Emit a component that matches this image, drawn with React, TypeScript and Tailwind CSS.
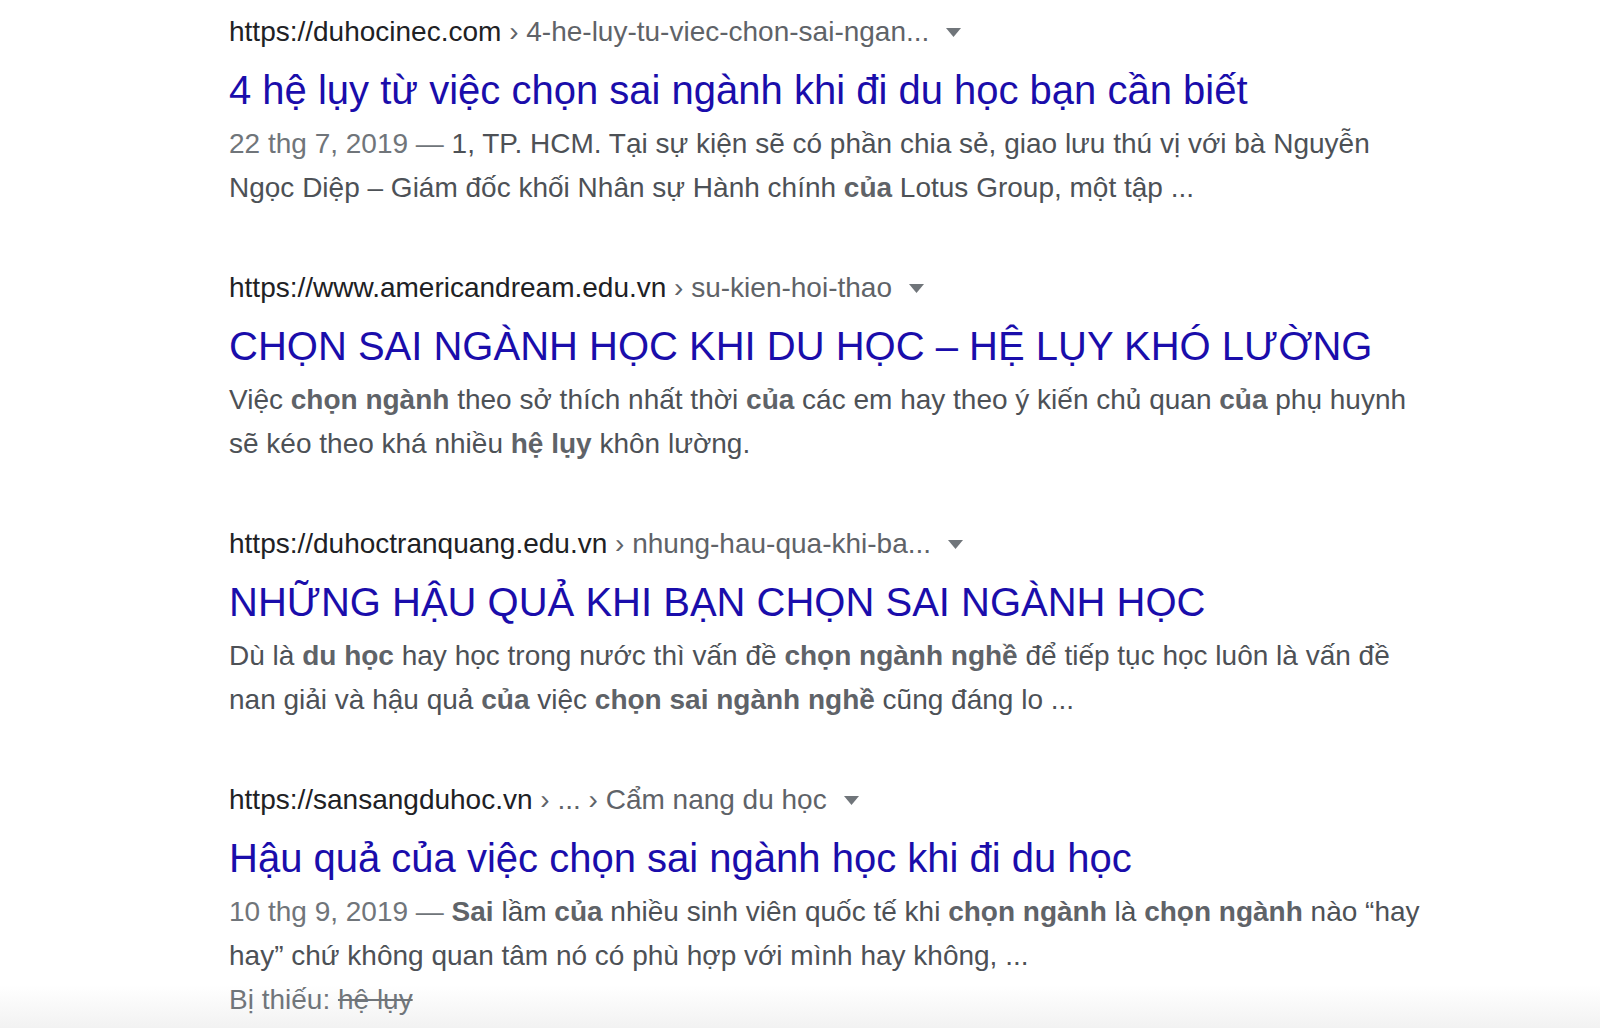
const font = { fontFamily: '"Liberation Sans", Arial, sans-serif' };

type Part = string | { b: string };

type Result = {
  domain: string;
  path: string;
  title: string;
  date?: string;
  snippet: Part[];
  missing?: string;
};

const results: Result[] = [
  {
    domain: "https://duhocinec.com",
    path: "4-he-luy-tu-viec-chon-sai-ngan...",
    title: "4 hệ lụy từ việc chọn sai ngành khi đi du học bạn cần biết",
    date: "22 thg 7, 2019",
    snippet: [
      "1, TP. HCM. Tại sự kiện sẽ có phần chia sẻ, giao lưu thú vị với bà Nguyễn Ngọc Diệp – Giám đốc khối Nhân sự Hành chính ",
      { b: "của" },
      " Lotus Group, một tập ...",
    ],
  },
  {
    domain: "https://www.americandream.edu.vn",
    path: "su-kien-hoi-thao",
    title: "CHỌN SAI NGÀNH HỌC KHI DU HỌC – HỆ LỤY KHÓ LƯỜNG",
    snippet: [
      "Việc ",
      { b: "chọn ngành" },
      " theo sở thích nhất thời ",
      { b: "của" },
      " các em hay theo ý kiến chủ quan ",
      { b: "của" },
      " phụ huynh sẽ kéo theo khá nhiều ",
      { b: "hệ lụy" },
      " khôn lường.",
    ],
  },
  {
    domain: "https://duhoctranquang.edu.vn",
    path: "nhung-hau-qua-khi-ba...",
    title: "NHỮNG HẬU QUẢ KHI BẠN CHỌN SAI NGÀNH HỌC",
    snippet: [
      "Dù là ",
      { b: "du học" },
      " hay học trong nước thì vấn đề ",
      { b: "chọn ngành nghề" },
      " để tiếp tục học luôn là vấn đề nan giải và hậu quả ",
      { b: "của" },
      " việc ",
      { b: "chọn sai ngành nghề" },
      " cũng đáng lo ...",
    ],
  },
  {
    domain: "https://sansangduhoc.vn",
    path: "... › Cẩm nang du học",
    title: "Hậu quả của việc chọn sai ngành học khi đi du học",
    date: "10 thg 9, 2019",
    snippet: [
      { b: "Sai" },
      " lầm ",
      { b: "của" },
      " nhiều sinh viên quốc tế khi ",
      { b: "chọn ngành" },
      " là ",
      { b: "chọn ngành" },
      " nào “hay hay” chứ không quan tâm nó có phù hợp với mình hay không, ...",
    ],
    missing: "hệ lụy",
  },
];

const Arrow = () => (
  <svg width="15" height="9" viewBox="0 0 15 9" className="ml-[17px] shrink-0">
    <path d="M0 0 H15 L7.5 9 Z" fill="#70757a" />
  </svg>
);

const SearchResult = ({ r }: { r: Result }) => (
  <div className="mb-[60px]">
    <div className="flex items-center h-[36px] text-[28px] leading-[36px] whitespace-nowrap">
      <span className="text-[#202124]">{r.domain}</span>
      <span className="text-[#5f6368]">&nbsp;›&nbsp;{r.path}</span>
      <Arrow />
    </div>
    <h3 className="mt-[14px] text-[40px] leading-[52px] text-[#1a0dab] whitespace-nowrap">
      {r.title}
    </h3>
    <div className="mt-[6px] w-[1196px] text-[28px] leading-[44px] text-[#4d5156]">
      {r.date && <span className="text-[#70757a]">{r.date} — </span>}
      {r.snippet.map((p, i) =>
        typeof p === "string" ? (
          <span key={i}>{p}</span>
        ) : (
          <b key={i} className="font-bold text-[#5f6368]">
            {p.b}
          </b>
        )
      )}
    </div>
    {r.missing && (
      <div className="text-[28px] leading-[44px] text-[#70757a]">
        Bị thiếu: <span className="line-through">{r.missing}</span>
      </div>
    )}
  </div>
);

export default function App() {
  return (
    <div
      className="h-[1028px] overflow-hidden bg-[linear-gradient(to_bottom,#ffffff_985px,#f2f2f2_1028px)]"
      style={font}
    >
      <div className="pl-[229px] pt-[14px]">
        {results.map((r, i) => (
          <SearchResult key={i} r={r} />
        ))}
      </div>
    </div>
  );
}
